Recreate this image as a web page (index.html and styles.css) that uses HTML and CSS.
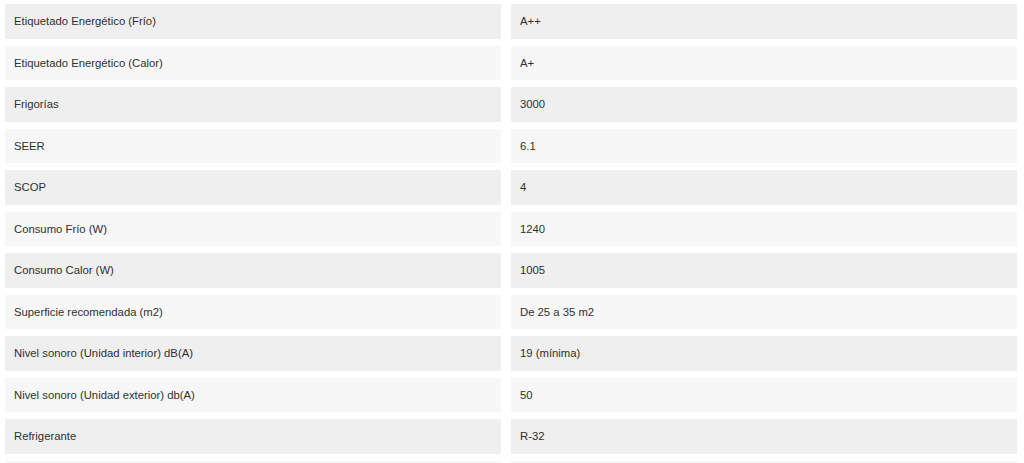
FILE: index.html
```html
<!DOCTYPE html>
<html lang="es">
<head>
<meta charset="utf-8">
<title>Especificaciones</title>
<link rel="stylesheet" href="styles.css">
</head>
<body>
<div class="specs">
  <div class="row"><div class="cell">Etiquetado Energético (Frío)</div><div class="cell">A++</div></div>
  <div class="row"><div class="cell">Etiquetado Energético (Calor)</div><div class="cell">A+</div></div>
  <div class="row"><div class="cell">Frigorías</div><div class="cell">3000</div></div>
  <div class="row"><div class="cell">SEER</div><div class="cell">6.1</div></div>
  <div class="row"><div class="cell">SCOP</div><div class="cell">4</div></div>
  <div class="row"><div class="cell">Consumo Frío (W)</div><div class="cell">1240</div></div>
  <div class="row"><div class="cell">Consumo Calor (W)</div><div class="cell">1005</div></div>
  <div class="row"><div class="cell">Superficie recomendada (m2)</div><div class="cell">De 25 a 35 m2</div></div>
  <div class="row"><div class="cell">Nivel sonoro (Unidad interior) dB(A)</div><div class="cell">19 (mínima)</div></div>
  <div class="row"><div class="cell">Nivel sonoro (Unidad exterior) db(A)</div><div class="cell">50</div></div>
  <div class="row"><div class="cell">Refrigerante</div><div class="cell">R-32</div></div>
  <div class="row"><div class="cell"></div><div class="cell"></div></div>
</div>
</body>
</html>
```
FILE: styles.css
```css
html, body {
  margin: 0;
  padding: 0;
  background: #ffffff;
  overflow: hidden;
}
body {
  font-family: "Liberation Sans", Arial, sans-serif;
  font-size: 11.3px;
  color: #303030;
}
.specs {
  display: flex;
  flex-direction: column;
  gap: 7px;
  padding: 4px 7px 0 5px;
}
.row {
  display: grid;
  grid-template-columns: 496px 506px;
  column-gap: 10px;
  height: 34.5px;
}
.cell {
  display: flex;
  align-items: center;
  padding-left: 9px;
  background: #efefef;
}
.row:nth-child(even) .cell {
  background: #f7f7f7;
}
```
